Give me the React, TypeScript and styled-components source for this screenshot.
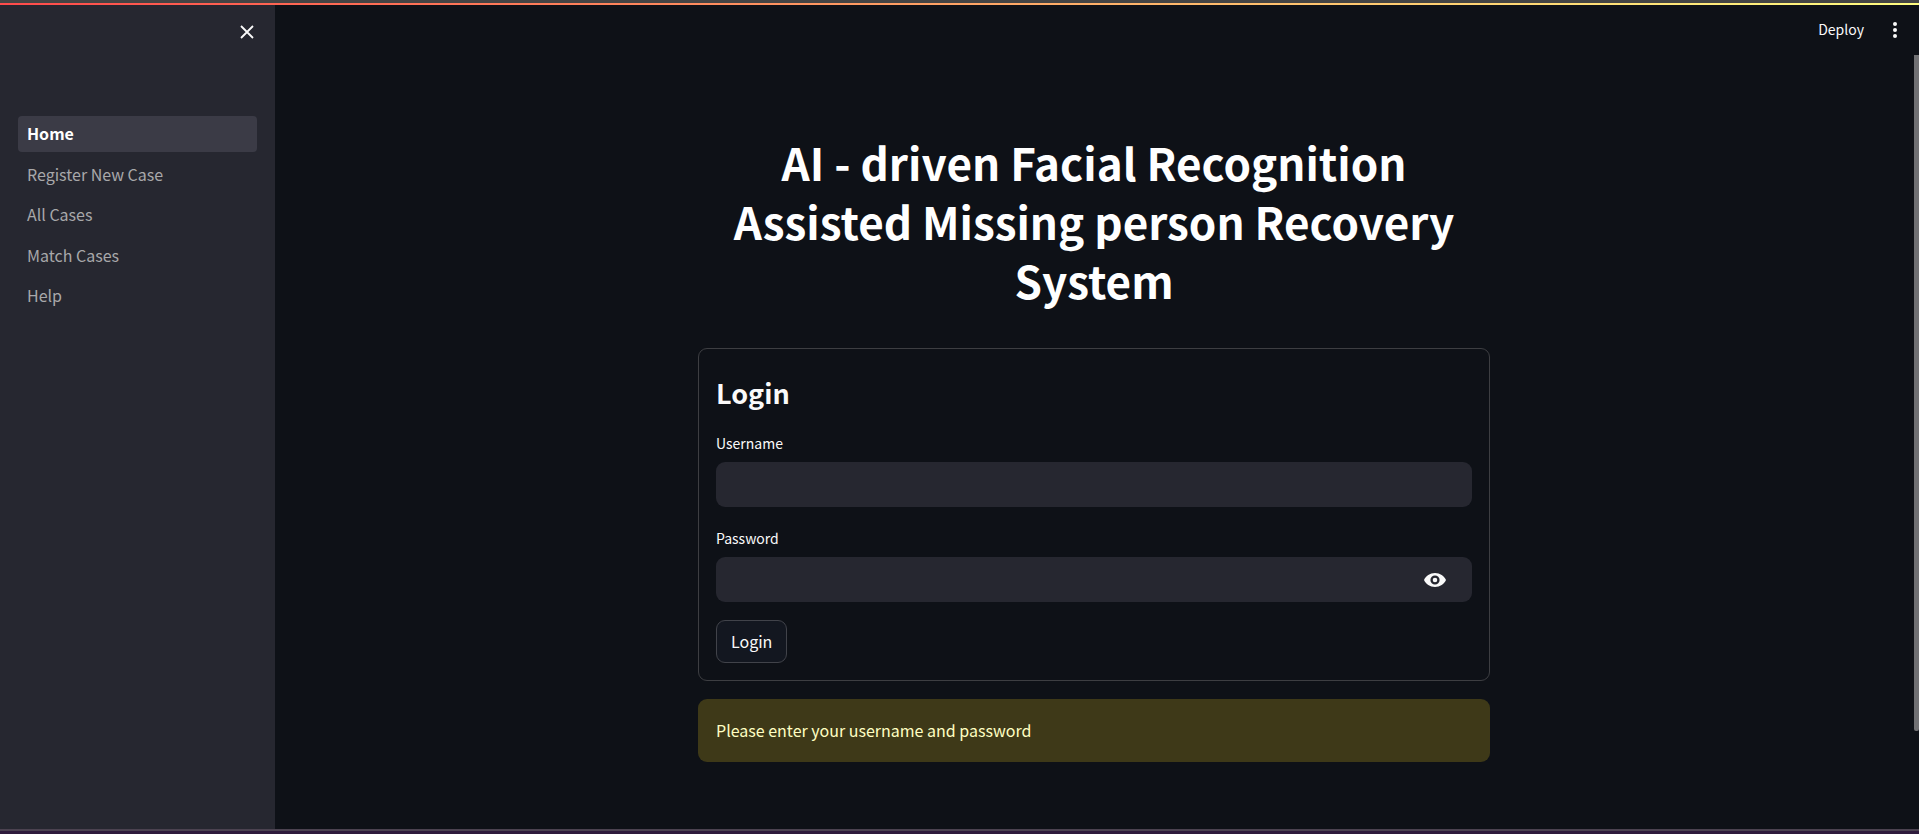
import React, { useState } from "react";
import styled, { createGlobalStyle } from "styled-components";

const GlobalStyle = createGlobalStyle`
  *, *::before, *::after { box-sizing: border-box; }
  html, body { margin: 0; background: #0e1117; }
  body {
    color: #fafafa;
    font-family: "Noto Sans CJK SC", "Noto Sans", sans-serif;
    font-size: 16px;
    line-height: 24px;
  }
  button, input { font: inherit; color: inherit; }
`;

const Page = styled.div`
  display: flex;
  flex-direction: column;
  min-height: 100vh;
`;

const TopEdge = styled.div`
  height: 5px;
  border-top: 3px solid #444444;
  background: linear-gradient(90deg, #ff4b4b, #fffd80);
`;

const BottomEdge = styled.div`
  height: 5px;
  border-top: 2px solid #4b4250;
  background: #2e1a3c;
`;

const Body = styled.div`
  display: flex;
  flex: 1;
`;

const Sidebar = styled.aside`
  flex: 0 0 275px;
  padding: 9px 18px;
  background: #262730;
`;

const SidebarHeader = styled.div`
  display: flex;
  justify-content: flex-end;
  height: 102px;
`;

const IconButton = styled.button`
  display: flex;
  align-items: center;
  justify-content: center;
  width: 36px;
  height: 36px;
  padding: 0;
  border: 0;
  background: transparent;
  cursor: pointer;
`;

const CloseButton = styled(IconButton)`
  margin-right: -8px;
`;

const NavList = styled.ul`
  display: flex;
  flex-direction: column;
  justify-content: space-between;
  height: 198px;
  margin: 0;
  padding: 0;
  list-style: none;
`;

const NavLink = styled.a<{ $active?: boolean }>`
  display: block;
  height: 36px;
  padding: 0 9px;
  border-radius: 4px;
  line-height: 34px;
  text-decoration: none;
  color: ${(p) => (p.$active ? "#ffffff" : "#a8a8aa")};
  background: ${(p) => (p.$active ? "#3b3b46" : "transparent")};
  font-weight: ${(p) => (p.$active ? 700 : 400)};
`;

const Main = styled.div`
  flex: 1;
  min-width: 0;
`;

const Toolbar = styled.header`
  display: flex;
  align-items: center;
  justify-content: flex-end;
  gap: 13px;
  height: 50px;
`;

const DeployButton = styled.button`
  padding: 0 0 2px;
  border: 0;
  background: transparent;
  font-size: 14px;
  line-height: 24px;
  cursor: pointer;
`;

const Content = styled.main`
  display: flex;
  flex-direction: column;
  width: 100%;
  max-width: 792px;
  margin: 0 auto;
  padding: 78px 0 60px;
`;

const Title = styled.h1`
  margin: 0 0 38px;
  color: #ffffff;
  font-size: 44px;
  font-weight: 700;
  line-height: 59px;
  text-align: center;
`;

const LoginForm = styled.form`
  display: flex;
  flex-direction: column;
  align-items: stretch;
  padding: 17px;
  border: 1px solid #3d3e42;
  border-radius: 9px;
`;

const FormTitle = styled.h3`
  margin: 8px 0 18px;
  font-size: 27px;
  font-weight: 600;
  line-height: 38px;
`;

const Field = styled.div`
  margin-bottom: 18px;
`;

const Label = styled.label`
  display: block;
  margin-bottom: 6px;
  font-size: 14px;
  line-height: 26px;
`;

const InputShell = styled.div`
  display: flex;
  align-items: center;
  height: 45px;
  padding-right: 19px;
  border-radius: 9px;
  background: #262730;
`;

const TextInput = styled.input`
  flex: 1;
  min-width: 0;
  height: 100%;
  padding: 0 13px;
  border: 0;
  outline: 0;
  background: transparent;
`;

const SubmitButton = styled.button`
  align-self: flex-start;
  height: 43px;
  padding: 0 14px 2px;
  border: 1px solid #41434a;
  border-radius: 9px;
  background: #131720;
  cursor: pointer;
`;

const Alert = styled.div`
  margin-top: 18px;
  padding: 18px;
  border-radius: 9px;
  background: #3e3918;
  color: #ffffc2;
  line-height: 27px;
`;

const ScrollRail = styled.div`
  display: flex;
  justify-content: flex-end;
  width: 6px;
  padding: 50px 0 98px;
`;

const ScrollThumb = styled.div`
  width: 5px;
  border-radius: 0 0 2px 2px;
  background: #717174;
`;

const pages = ["Home", "Register New Case", "All Cases", "Match Cases", "Help"];

export default function App() {
  const [visible, setVisible] = useState(false);
  return (
    <Page>
      <GlobalStyle />
      <TopEdge />
      <Body>
        <Sidebar>
          <SidebarHeader>
            <CloseButton type="button" aria-label="Close sidebar">
              <svg width="14" height="14" viewBox="0 0 14 14" stroke="#fafafa" strokeWidth="1.8">
                <path d="M1 1 13 13M13 1 1 13" />
              </svg>
            </CloseButton>
          </SidebarHeader>
          <nav>
            <NavList>
              {pages.map((name, i) => (
                <li key={name}>
                  <NavLink href="#" $active={i === 0}>{name}</NavLink>
                </li>
              ))}
            </NavList>
          </nav>
        </Sidebar>
        <Main>
          <Toolbar>
            <DeployButton type="button">Deploy</DeployButton>
            <IconButton type="button" aria-label="Menu">
              <svg width="4" height="16" viewBox="0 0 4 16" fill="#fafafa">
                <circle cx="2" cy="2" r="2" />
                <circle cx="2" cy="8" r="2" />
                <circle cx="2" cy="14" r="2" />
              </svg>
            </IconButton>
          </Toolbar>
          <Content>
            <Title>AI - driven Facial Recognition Assisted Missing person Recovery System</Title>
            <LoginForm onSubmit={(e) => e.preventDefault()}>
              <FormTitle>Login</FormTitle>
              <Field>
                <Label htmlFor="username">Username</Label>
                <InputShell>
                  <TextInput id="username" type="text" />
                </InputShell>
              </Field>
              <Field>
                <Label htmlFor="password">Password</Label>
                <InputShell>
                  <TextInput id="password" type={visible ? "text" : "password"} />
                  <IconButton type="button" aria-label="Show password" onClick={() => setVisible(!visible)}>
                    <svg width="22" height="14" viewBox="0 0 22 14" fill="#fafafa" fillRule="evenodd">
                      <path d="M11 0C6 0 1.800 2.900 0 7c1.800 4.100 6 7 11 7s9.200-2.900 11-7c-1.800-4.100-6-7-11-7Zm0 11.600a4.600 4.600 0 1 1 0-9.200 4.600 4.600 0 0 1 0 9.200Zm0-2.300a2.300 2.300 0 1 0 0-4.600 2.300 2.300 0 0 0 0 4.600Z" />
                    </svg>
                  </IconButton>
                </InputShell>
              </Field>
              <SubmitButton type="submit">Login</SubmitButton>
            </LoginForm>
            <Alert role="alert">Please enter your username and password</Alert>
          </Content>
        </Main>
        <ScrollRail>
          <ScrollThumb />
        </ScrollRail>
      </Body>
      <BottomEdge />
    </Page>
  );
}
